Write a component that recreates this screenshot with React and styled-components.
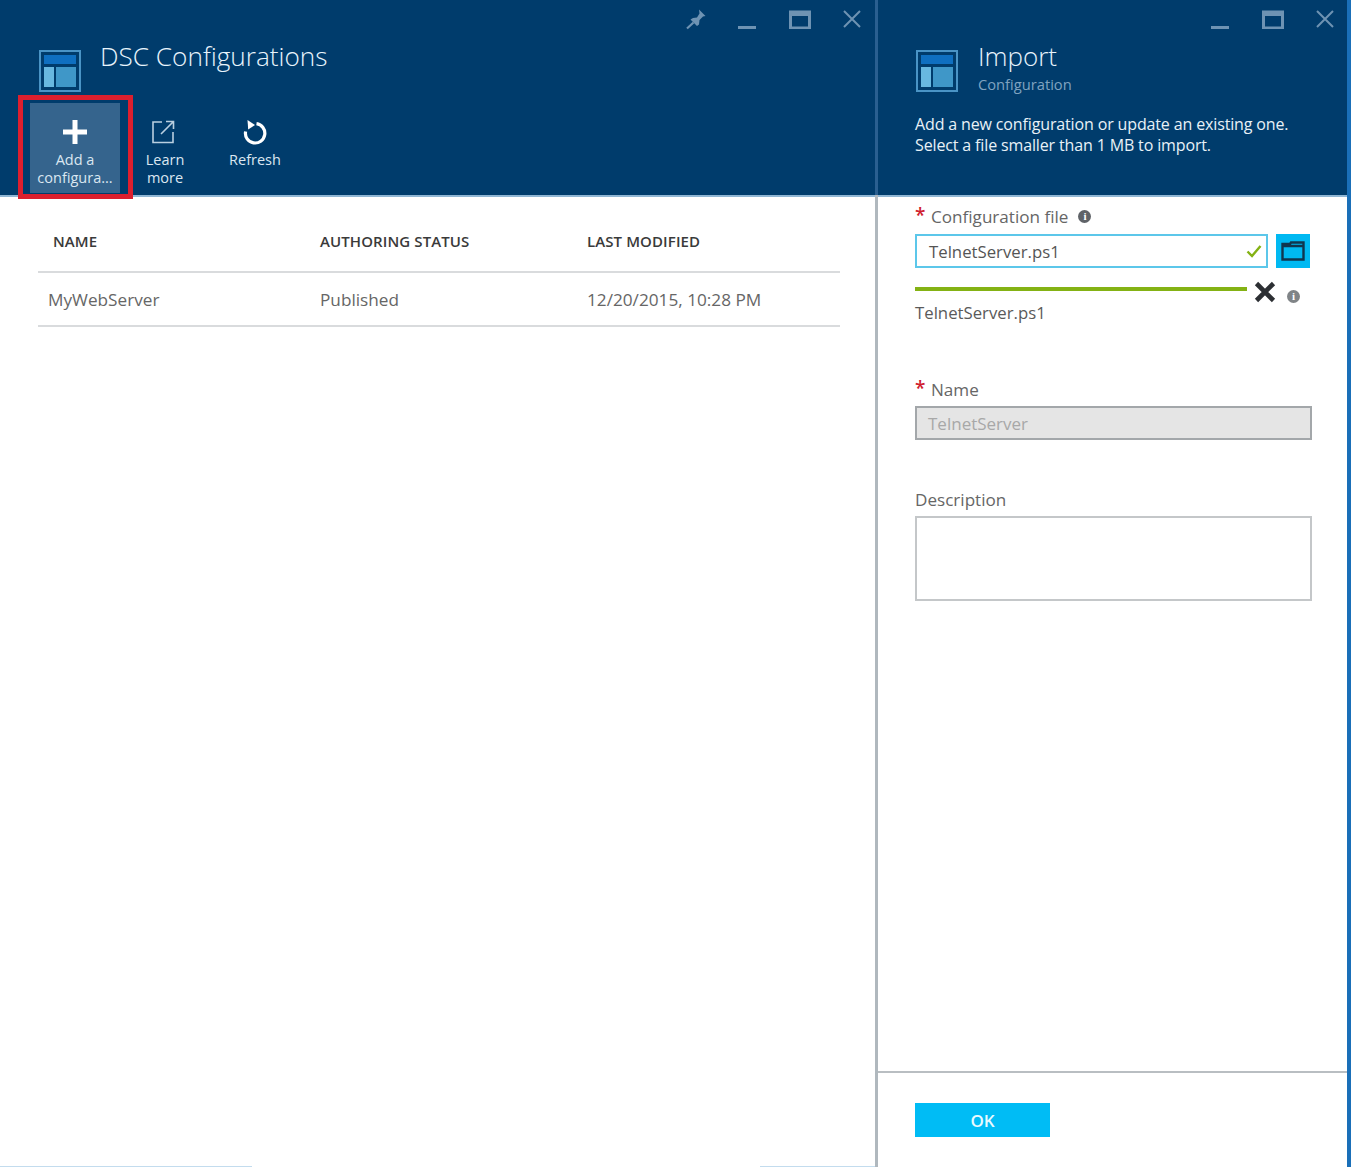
import React from 'react';
import styled, { createGlobalStyle } from 'styled-components';

const Global = createGlobalStyle`
  html, body { margin: 0; padding: 0; background: #fff; }
  body { font-family: "Open Sans", "Noto Sans", "Liberation Sans", sans-serif; }
  * { box-sizing: border-box; }
`;

const Page = styled.div`
  width: 1351px;
  height: 1167px;
  display: flex;
  overflow: hidden;
  background: #fff;
`;

const LeftBlade = styled.section`
  width: 875px;
  display: flex;
  flex-direction: column;
  position: relative;
`;

const Divider = styled.div`
  width: 3px;
  display: flex;
  flex-direction: column;
`;
const DividerTop = styled.div`
  height: 195px;
  background: #2a5f90;
`;
const DividerBottom = styled.div`
  flex: 1;
  background: #b0b8be;
`;

const RightBlade = styled.section`
  width: 469px;
  display: flex;
  flex-direction: column;
`;

const RightEdge = styled.div`
  width: 4px;
  background: #1a6fb8;
`;

const Header = styled.header`
  height: 197px;
  background: #003c6c;
  border-bottom: 2px solid #8fb6d4;
  position: relative;
  flex-shrink: 0;
`;

const WindowControls = styled.div`
  position: absolute;
  top: 8px;
  right: ${p => p.$right}px;
  display: flex;
  align-items: center;
`;

const Ctl = styled.svg`
  display: block;
  color: #6e93b3;
  flex-shrink: 0;
`;

const TitleRow = styled.div`
  display: flex;
  padding: ${p => p.$pad};
  gap: ${p => p.$gap}px;
`;

const IconSlot = styled.div`
  padding-top: 11px;
`;

const BladeIconWrap = styled.svg`
  display: block;
  flex-shrink: 0;
  width: 42px;
  height: 42px;
`;

const Title = styled.h1`
  margin: 0;
  font-weight: 300;
  font-size: 26.2px;
  line-height: 34px;
  color: #e8f4fc;
  white-space: nowrap;
`;

const ImportTitle = styled(Title)`
  font-size: 26px;
`;

const Subtitle = styled.div`
  font-size: 14.7px;
  line-height: 20px;
  color: #7fa3c0;
  margin-top: 1px;
`;

const Toolbar = styled.div`
  display: flex;
  padding-left: 30px;
  position: absolute;
  top: 103px;
  left: 0;
`;

const ToolButton = styled.div`
  width: 90px;
  height: 90px;
  background: ${p => (p.$active ? '#35648d' : 'transparent')};
  color: #dbe7f1;
  font-size: 14.5px;
  line-height: 18px;
  text-align: center;
  display: flex;
  flex-direction: column;
  align-items: center;
  padding-top: 16px;
`;

const ToolIcon = styled.svg`
  display: block;
  width: 28px;
  height: 28px;
  margin-bottom: 5px;
  margin-top: -1px;
  margin-left: ${p => p.$shift || 0}px;
  flex-shrink: 0;
`;

const Highlight = styled.div`
  position: absolute;
  left: 18px;
  top: 95px;
  width: 115px;
  height: 104px;
  border: 5px solid #dc1f2e;
  pointer-events: none;
`;

const TableWrap = styled.div`
  padding: 0 35px 0 38px;
`;

const HeadRow = styled.div`
  display: grid;
  grid-template-columns: 267px 267px 1fr;
  height: 76px;
  align-items: center;
  padding-top: 13px;
  padding-left: 15px;
  border-bottom: 2px solid #d9dbdd;
`;

const HeadCell = styled.div`
  font-size: 15px;
  font-weight: 600;
  letter-spacing: 0.1px;
  color: #3a3a3a;
  white-space: nowrap;
`;

const BodyRow = styled.div`
  display: grid;
  grid-template-columns: 272px 267px 1fr;
  height: 54px;
  align-items: center;
  padding-left: 10px;
  border-bottom: 2px solid #d9dbdd;
`;

const BodyCell = styled.div`
  font-size: 17.2px;
  font-weight: 400;
  color: #666;
  white-space: nowrap;
`;

const BottomStrip = styled.div`
  position: absolute;
  bottom: 0;
  height: 1px;
  background: #c3dcee;
  left: ${p => p.$left}px;
  width: ${p => p.$width}px;
`;

const Description = styled.p`
  margin: 20px 0 0 37px;
  font-size: 16px;
  line-height: 21px;
  letter-spacing: -0.14px;
  color: #e8f1f7;
  white-space: nowrap;
`;

const Form = styled.div`
  flex: 1;
  padding: 7px 35px 0 37px;
  display: flex;
  flex-direction: column;
`;

const Label = styled.div`
  display: flex;
  align-items: center;
  height: 24px;
  font-size: 17.1px;
  color: #666;
`;

const Star = styled.span`
  color: #d0202e;
  width: 16px;
  font-size: 19px;
  line-height: 20px;
  margin-top: -3px;
  font-weight: 600;
`;

const InfoDot = styled.span`
  width: 13px;
  height: 13px;
  border-radius: 50%;
  background: ${p => p.$c || '#5f6368'};
  color: #fff;
  font-size: 11px;
  line-height: 13px;
  font-weight: 700;
  text-align: center;
  margin-left: ${p => p.$ml || 0}px;
  flex-shrink: 0;
  font-family: "Liberation Serif", serif;
`;

const FileRow = styled.div`
  display: flex;
  gap: 8px;
  margin-top: 6px;
`;

const FileInput = styled.div`
  width: 353px;
  height: 34px;
  border: 2px solid #5cc7ea;
  padding: 0 11px 0 12px;
  display: flex;
  align-items: center;
  justify-content: space-between;
  font-size: 16.75px;
  color: #555;
`;

const Check = styled.svg`
  display: block;
  margin-right: -7px;
`;

const FolderButton = styled.div`
  width: 34px;
  height: 34px;
  background: #00b9f2;
  display: flex;
  align-items: center;
  justify-content: center;
`;

const ProgressRow = styled.div`
  display: flex;
  align-items: center;
  margin-top: 12px;
  height: 24px;
  position: relative;
`;

const ProgressBar = styled.div`
  width: 332px;
  height: 4px;
  background: #84b214;
  margin-top: -6px;
`;

const RemoveIcon = styled.svg`
  display: block;
  margin-left: 6px;
  margin-top: -1px;
`;

const ProgressInfo = styled(InfoDot)`
  margin-top: 8px;
`;

const FileName = styled.div`
  font-size: 16.75px;
  color: #5a5a5a;
  line-height: 24px;
  margin-top: -3px;
`;

const NameLabel = styled(Label)`
  margin-top: 52px;
`;

const NameInput = styled.div`
  width: 397px;
  height: 34px;
  margin-top: 5px;
  background: #e5e5e5;
  border: 2px solid #a3a7aa;
  padding: 0 11px;
  display: flex;
  align-items: center;
  font-size: 17px;
  color: #a8a8a8;
`;

const DescLabel = styled(Label)`
  margin-top: 47px;
`;

const TextArea = styled.div`
  width: 397px;
  height: 85px;
  margin-top: 5px;
  border: 2px solid #c4c7c9;
`;

const Footer = styled.div`
  height: 96px;
  border-top: 2px solid #b9bec2;
  padding: 30px 0 0 37px;
  flex-shrink: 0;
`;

const OkButton = styled.div`
  width: 135px;
  height: 34px;
  background: #00bcf5;
  color: #eafaff;
  font-size: 17px;
  font-weight: 600;
  display: flex;
  align-items: center;
  justify-content: center;
`;

const Spacer = styled.span`
  width: ${p => p.$w}px;
  flex-shrink: 0;
`;

const BladeIcon = () => (
  <BladeIconWrap viewBox="0 0 42 42">
    <rect x="1" y="1" width="40" height="40" fill="none" stroke="#4a94c6" strokeWidth="2" />
    <rect x="5" y="5" width="32" height="9" fill="#0f6fc0" />
    <rect x="5" y="17" width="10" height="20" fill="#68b8e0" />
    <rect x="17" y="17" width="20" height="20" fill="#3f97c8" />
  </BladeIconWrap>
);

const Pin = () => (
  <Ctl width="22" height="22" viewBox="0 0 22 22">
    <path d="M14 1.5 L20.5 8 L18 8.5 L14.5 12 L14 16.5 L12 18 L5.5 11.5 L8 10 L12 9.5 L14.5 5.5 Z" fill="currentColor" />
    <path d="M8.5 14.5 L2 20.5" stroke="currentColor" strokeWidth="2.2" />
  </Ctl>
);
const Minimize = () => (
  <Ctl width="20" height="22" viewBox="0 0 20 22">
    <rect x="1" y="18" width="18" height="3" fill="currentColor" />
  </Ctl>
);
const Maximize = () => (
  <Ctl width="22" height="20" viewBox="0 0 22 20">
    <rect x="1.5" y="3" width="19" height="16" fill="none" stroke="currentColor" strokeWidth="3" />
    <rect x="1" y="2" width="20" height="5" fill="currentColor" />
  </Ctl>
);
const Close = () => (
  <Ctl width="20" height="20" viewBox="0 0 20 20">
    <path d="M2 2 L18 18 M18 2 L2 18" stroke="currentColor" strokeWidth="2" />
  </Ctl>
);

export default function App() {
  return (
    <Page>
      <Global />
      <LeftBlade>
        <Header>
          <WindowControls $right={13}>
            <Pin />
            <Spacer $w={30} />
            <Minimize />
            <Spacer $w={32} />
            <Maximize />
            <Spacer $w={31} />
            <Close />
          </WindowControls>
          <TitleRow $pad="39px 0 0 39px" $gap={19}>
            <IconSlot><BladeIcon /></IconSlot>
            <Title>DSC Configurations</Title>
          </TitleRow>
          <Toolbar>
            <ToolButton $active>
              <ToolIcon viewBox="0 0 28 28">
                <path d="M11.5 2 H16.5 V11.5 H26 V16.5 H16.5 V26 H11.5 V16.5 H2 V11.5 H11.5 Z" fill="#fff" />
              </ToolIcon>
              Add a<br />configura...
            </ToolButton>
            <ToolButton>
              <ToolIcon viewBox="0 0 28 28" $shift={-4}>
                <path d="M13 4 H4 V24.5 H24 V14" fill="none" stroke="#b9cfe0" strokeWidth="1.6" />
                <path d="M12 16 L24 4 M17 3.5 H24.5 V11" fill="none" stroke="#b9cfe0" strokeWidth="1.6" />
              </ToolIcon>
              Learn<br />more
            </ToolButton>
            <ToolButton>
              <ToolIcon viewBox="0 0 28 28" $shift={-1}>
                <path d="M15.5 5.7 A9.7 9.7 0 1 1 4.6 13.5" fill="none" stroke="#fff" strokeWidth="3.2" />
                <path d="M6.5 2 L14 7 L7.2 11.5 Z" fill="#fff" />
              </ToolIcon>
              Refresh
            </ToolButton>
          </Toolbar>
          <Highlight />
        </Header>
        <TableWrap>
          <HeadRow>
            <HeadCell>NAME</HeadCell>
            <HeadCell>AUTHORING STATUS</HeadCell>
            <HeadCell>LAST MODIFIED</HeadCell>
          </HeadRow>
          <BodyRow>
            <BodyCell>MyWebServer</BodyCell>
            <BodyCell>Published</BodyCell>
            <BodyCell>12/20/2015, 10:28 PM</BodyCell>
          </BodyRow>
        </TableWrap>
        <BottomStrip $left={0} $width={252} />
        <BottomStrip $left={760} $width={115} />
      </LeftBlade>
      <Divider>
        <DividerTop />
        <DividerBottom />
      </Divider>
      <RightBlade>
        <Header>
          <WindowControls $right={12}>
            <Minimize />
            <Spacer $w={32} />
            <Maximize />
            <Spacer $w={31} />
            <Close />
          </WindowControls>
          <TitleRow $pad="39px 0 0 38px" $gap={20}>
            <IconSlot><BladeIcon /></IconSlot>
            <div>
              <ImportTitle>Import</ImportTitle>
              <Subtitle>Configuration</Subtitle>
            </div>
          </TitleRow>
          <Description>
            Add a new configuration or update an existing one.
            <br />
            Select a file smaller than 1 MB to import.
          </Description>
        </Header>
        <Form>
          <Label>
            <Star>*</Star>Configuration file<InfoDot $ml={10}>i</InfoDot>
          </Label>
          <FileRow>
            <FileInput>
              TelnetServer.ps1
              <Check width="16" height="14" viewBox="0 0 16 14">
                <path d="M1.5 7.5 L6 12 L14.5 2" fill="none" stroke="#84b214" strokeWidth="2.4" />
              </Check>
            </FileInput>
            <FolderButton>
              <svg width="24" height="20" viewBox="0 0 24 20">
                <path d="M1.5 5 H22.5 V18.5 H1.5 Z M1.5 5 V3 H9 L10 1.5 H22.5 V5" fill="none" stroke="#10364f" strokeWidth="2.4" />
              </svg>
            </FolderButton>
          </FileRow>
          <ProgressRow>
            <ProgressBar />
            <RemoveIcon width="24" height="24" viewBox="0 0 24 24">
              <path d="M3.5 3.5 L20.5 20.5 M20.5 3.5 L3.5 20.5" stroke="#2c2f33" strokeWidth="4.6" />
            </RemoveIcon>
            <ProgressInfo $ml={10} $c="#808487">i</ProgressInfo>
          </ProgressRow>
          <FileName>TelnetServer.ps1</FileName>
          <NameLabel>
            <Star>*</Star>Name
          </NameLabel>
          <NameInput>TelnetServer</NameInput>
          <DescLabel>Description</DescLabel>
          <TextArea />
        </Form>
        <Footer>
          <OkButton>OK</OkButton>
        </Footer>
      </RightBlade>
      <RightEdge />
    </Page>
  );
}
